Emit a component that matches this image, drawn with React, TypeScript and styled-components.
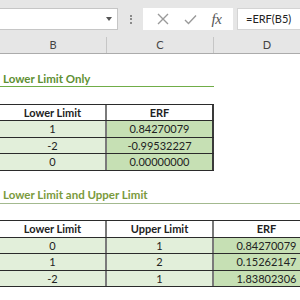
import React from "react";
import styled, { createGlobalStyle } from "styled-components";

const COL = 107;
const ROW = 16.5;

const Global = createGlobalStyle`
  html, body {
    margin: 0;
    padding: 0;
    background: #ffffff;
    overflow: hidden;
  }
  body {
    font-family: Lato, "Liberation Sans", sans-serif;
    color: #222222;
  }
`;

const Page = styled.div`
  width: 300px;
  height: 300px;
  overflow: hidden;
  display: flex;
  flex-direction: column;
  align-items: flex-start;
`;

const Toolbar = styled.div`
  height: 37px;
  width: 300px;
  flex: none;
  background: #e6e6e6;
  display: flex;
  align-items: flex-start;
  padding-top: 8px;
  box-sizing: border-box;
`;

const NameBox = styled.div`
  width: 120px;
  height: 22px;
  margin-left: -2px;
  box-sizing: border-box;
  background: #ffffff;
  border: 1px solid #c6c6c6;
  display: flex;
  align-items: center;
  justify-content: flex-end;
  padding-right: 5px;
`;

const Caret = styled.span`
  width: 0;
  height: 0;
  border-left: 3.5px solid transparent;
  border-right: 3.5px solid transparent;
  border-top: 4px solid #555555;
`;

const Grip = styled.div`
  width: 25px;
  height: 22px;
  display: flex;
  flex-direction: column;
  align-items: center;
  justify-content: center;
  gap: 1.5px;
`;

const Dot = styled.span`
  width: 2px;
  height: 2px;
  background: #8a8a8a;
`;

const FxBox = styled.div`
  width: 90px;
  height: 22px;
  box-sizing: border-box;
  background: #ffffff;
  display: flex;
  align-items: center;
  justify-content: space-around;
  padding: 0 4px 0 6px;
`;

const FxLabel = styled.span`
  font-family: "Liberation Serif", "DejaVu Serif", serif;
  font-style: italic;
  font-size: 15px;
  color: #555555;
  letter-spacing: -0.5px;
`;

const FormulaInput = styled.div`
  flex: 1;
  height: 22px;
  margin-left: 4px;
  box-sizing: border-box;
  background: #ffffff;
  border: 1px solid #d4d4d4;
  border-right: none;
  font-size: 11px;
  line-height: 20px;
  padding-left: 8px;
  color: #222222;
`;

const HeaderRow = styled.div`
  height: 16px;
  flex: none;
  display: flex;
  background: #e6e6e6;
  border-bottom: 1px solid #ababab;
`;

const HeaderCell = styled.div`
  width: ${COL}px;
  flex: none;
  box-sizing: border-box;
  border-right: 1px solid #c6c6c6;
  text-align: center;
  font-size: 11px;
  line-height: 16px;
  color: #444444;
`;

const Spacer = styled.div`
  height: ${ROW}px;
  flex: none;
`;

const TitleRow = styled.div<{ $span: number; $line: string; $color: string }>`
  height: ${ROW}px;
  flex: none;
  width: ${(p) => p.$span * COL}px;
  box-sizing: border-box;
  border-bottom: 1.5px solid ${(p) => p.$line};
  padding-left: 3px;
  font-weight: 700;
  font-size: 11.5px;
  line-height: 15px;
  color: ${(p) => p.$color};
`;

const Table = styled.div`
  flex: none;
  display: flex;
  flex-direction: column;
  border-top: 1.5px solid #2b2b2b;
`;

const TRow = styled.div`
  height: ${ROW}px;
  display: flex;
  box-sizing: border-box;
  border-bottom: 1px solid #2b2b2b;
`;

const Cell = styled.div<{ $tone: "head" | "light" | "dark"; $last?: boolean }>`
  width: ${COL}px;
  flex: none;
  box-sizing: border-box;
  border-right: ${(p) => (p.$last ? "2px solid #3a3a3a" : "2px solid #7a7a7a")};
  background: ${(p) =>
    p.$tone === "head" ? "#ffffff" : p.$tone === "light" ? "#e2efda" : "#c6e0b4"};
  font-weight: ${(p) => (p.$tone === "head" ? 700 : 400)};
  text-align: center;
  font-size: 11px;
  line-height: 15px;
  color: #222222;
`;

const Cross = () => (
  <svg width="12" height="12" viewBox="0 0 12 12">
    <path d="M1 1 L11 11 M11 1 L1 11" stroke="#9a9a9a" strokeWidth="1.4" fill="none" />
  </svg>
);

const Check = () => (
  <svg width="13" height="11" viewBox="0 0 13 11">
    <path d="M1 6 L4.5 9.5 L12 1.5" stroke="#9a9a9a" strokeWidth="1.4" fill="none" />
  </svg>
);

const table1 = [
  ["1", "0.84270079"],
  ["-2", "-0.99532227"],
  ["0", "0.00000000"],
];

const table2 = [
  ["0", "1", "0.84270079"],
  ["1", "2", "0.15262147"],
  ["-2", "1", "1.83802306"],
];

export default function App() {
  return (
    <Page>
      <Global />
      <Toolbar>
        <NameBox>
          <Caret />
        </NameBox>
        <Grip>
          <Dot />
          <Dot />
          <Dot />
        </Grip>
        <FxBox>
          <Cross />
          <Check />
          <FxLabel>fx</FxLabel>
        </FxBox>
        <FormulaInput>=ERF(B5)</FormulaInput>
      </Toolbar>
      <HeaderRow>
        <HeaderCell>B</HeaderCell>
        <HeaderCell>C</HeaderCell>
        <HeaderCell>D</HeaderCell>
      </HeaderRow>

      <Spacer />
      <TitleRow $span={2} $line="#70ad47" $color="#5e8f32">
        Lower Limit Only
      </TitleRow>
      <Spacer />
      <Table>
        <TRow>
          <Cell $tone="head">Lower Limit</Cell>
          <Cell $tone="head" $last>ERF</Cell>
        </TRow>
        {table1.map(([a, b]) => (
          <TRow key={a}>
            <Cell $tone="light">{a}</Cell>
            <Cell $tone="dark" $last>{b}</Cell>
          </TRow>
        ))}
      </Table>

      <Spacer />
      <TitleRow $span={3} $line="#a3b98f" $color="#7a9a3c">
        Lower Limit and Upper Limit
      </TitleRow>
      <Spacer />
      <Table>
        <TRow>
          <Cell $tone="head">Lower Limit</Cell>
          <Cell $tone="head">Upper Limit</Cell>
          <Cell $tone="head" $last>ERF</Cell>
        </TRow>
        {table2.map(([a, b, c]) => (
          <TRow key={a}>
            <Cell $tone="light">{a}</Cell>
            <Cell $tone="light">{b}</Cell>
            <Cell $tone="dark" $last>{c}</Cell>
          </TRow>
        ))}
      </Table>
    </Page>
  );
}
